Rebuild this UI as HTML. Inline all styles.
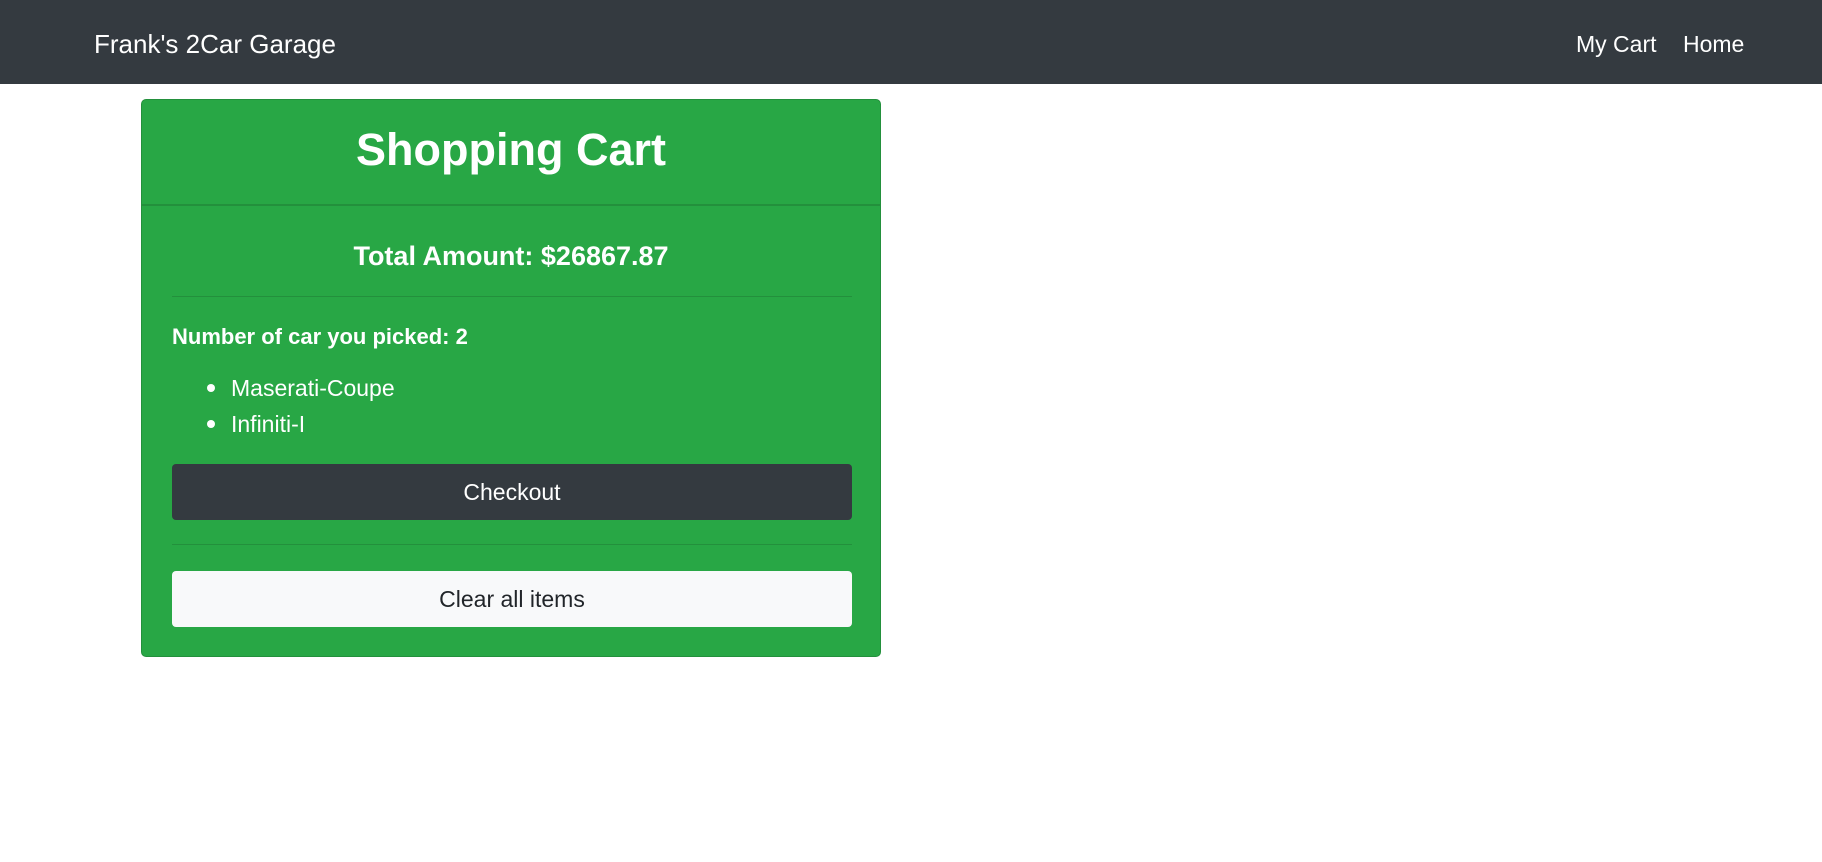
<!DOCTYPE html>
<html><head><style>
*{box-sizing:border-box;margin:0;padding:0}
body{width:1822px;height:862px;background:#fff;font-family:"Segoe UI","Liberation Sans",sans-serif;color:#fff;position:relative;overflow:hidden}
nav{position:absolute;left:0;top:0;width:1822px;height:84px;background:#343a40}
.brand{position:absolute;left:94px;top:28px;font-size:26px;line-height:32px}
.nl{position:absolute;top:30px;font-size:23px;line-height:28px}
.card{position:absolute;left:141px;top:99px;width:740px;height:558px;background:#28a745;border:1px solid #23903c;border-radius:5px}
.hd{height:106px;border-bottom:2px solid #23903c;text-align:center;font-size:45px;font-weight:600;line-height:100px}
.abs{position:absolute;left:0;width:100%}
hr{position:absolute;left:30px;width:680px;border:0;border-top:1px solid #23903c}
.btn{position:absolute;left:30px;width:680px;height:56px;border-radius:4px;text-align:center;line-height:56px;font-size:23px}
</style></head><body>
<nav><div class="brand">Frank's 2Car Garage</div>
<div class="nl" style="left:1576px">My Cart</div><div class="nl" style="left:1683px">Home</div></nav>
<div class="card">
<div class="hd">Shopping Cart</div>
<div class="abs" style="top:138px;text-align:center;font-size:27px;font-weight:600;line-height:36px">Total Amount: $26867.87</div>
<hr style="top:196px">
<div class="abs" style="top:222px;left:30px;font-size:22px;font-weight:600;line-height:30px">Number of car you picked: 2</div>
<div class="abs" style="top:270px;left:89px;font-size:23px;line-height:36px">Maserati-Coupe<br>Infiniti-I</div>
<div style="position:absolute;left:65px;top:284px;width:8px;height:8px;border-radius:50%;background:#fff"></div>
<div style="position:absolute;left:65px;top:320px;width:8px;height:8px;border-radius:50%;background:#fff"></div>
<div class="btn" style="top:364px;background:#343a40;color:#fff">Checkout</div>
<hr style="top:444px">
<div class="btn" style="top:471px;background:#f8f9fa;color:#212529">Clear all items</div>
</div>
</body></html>
